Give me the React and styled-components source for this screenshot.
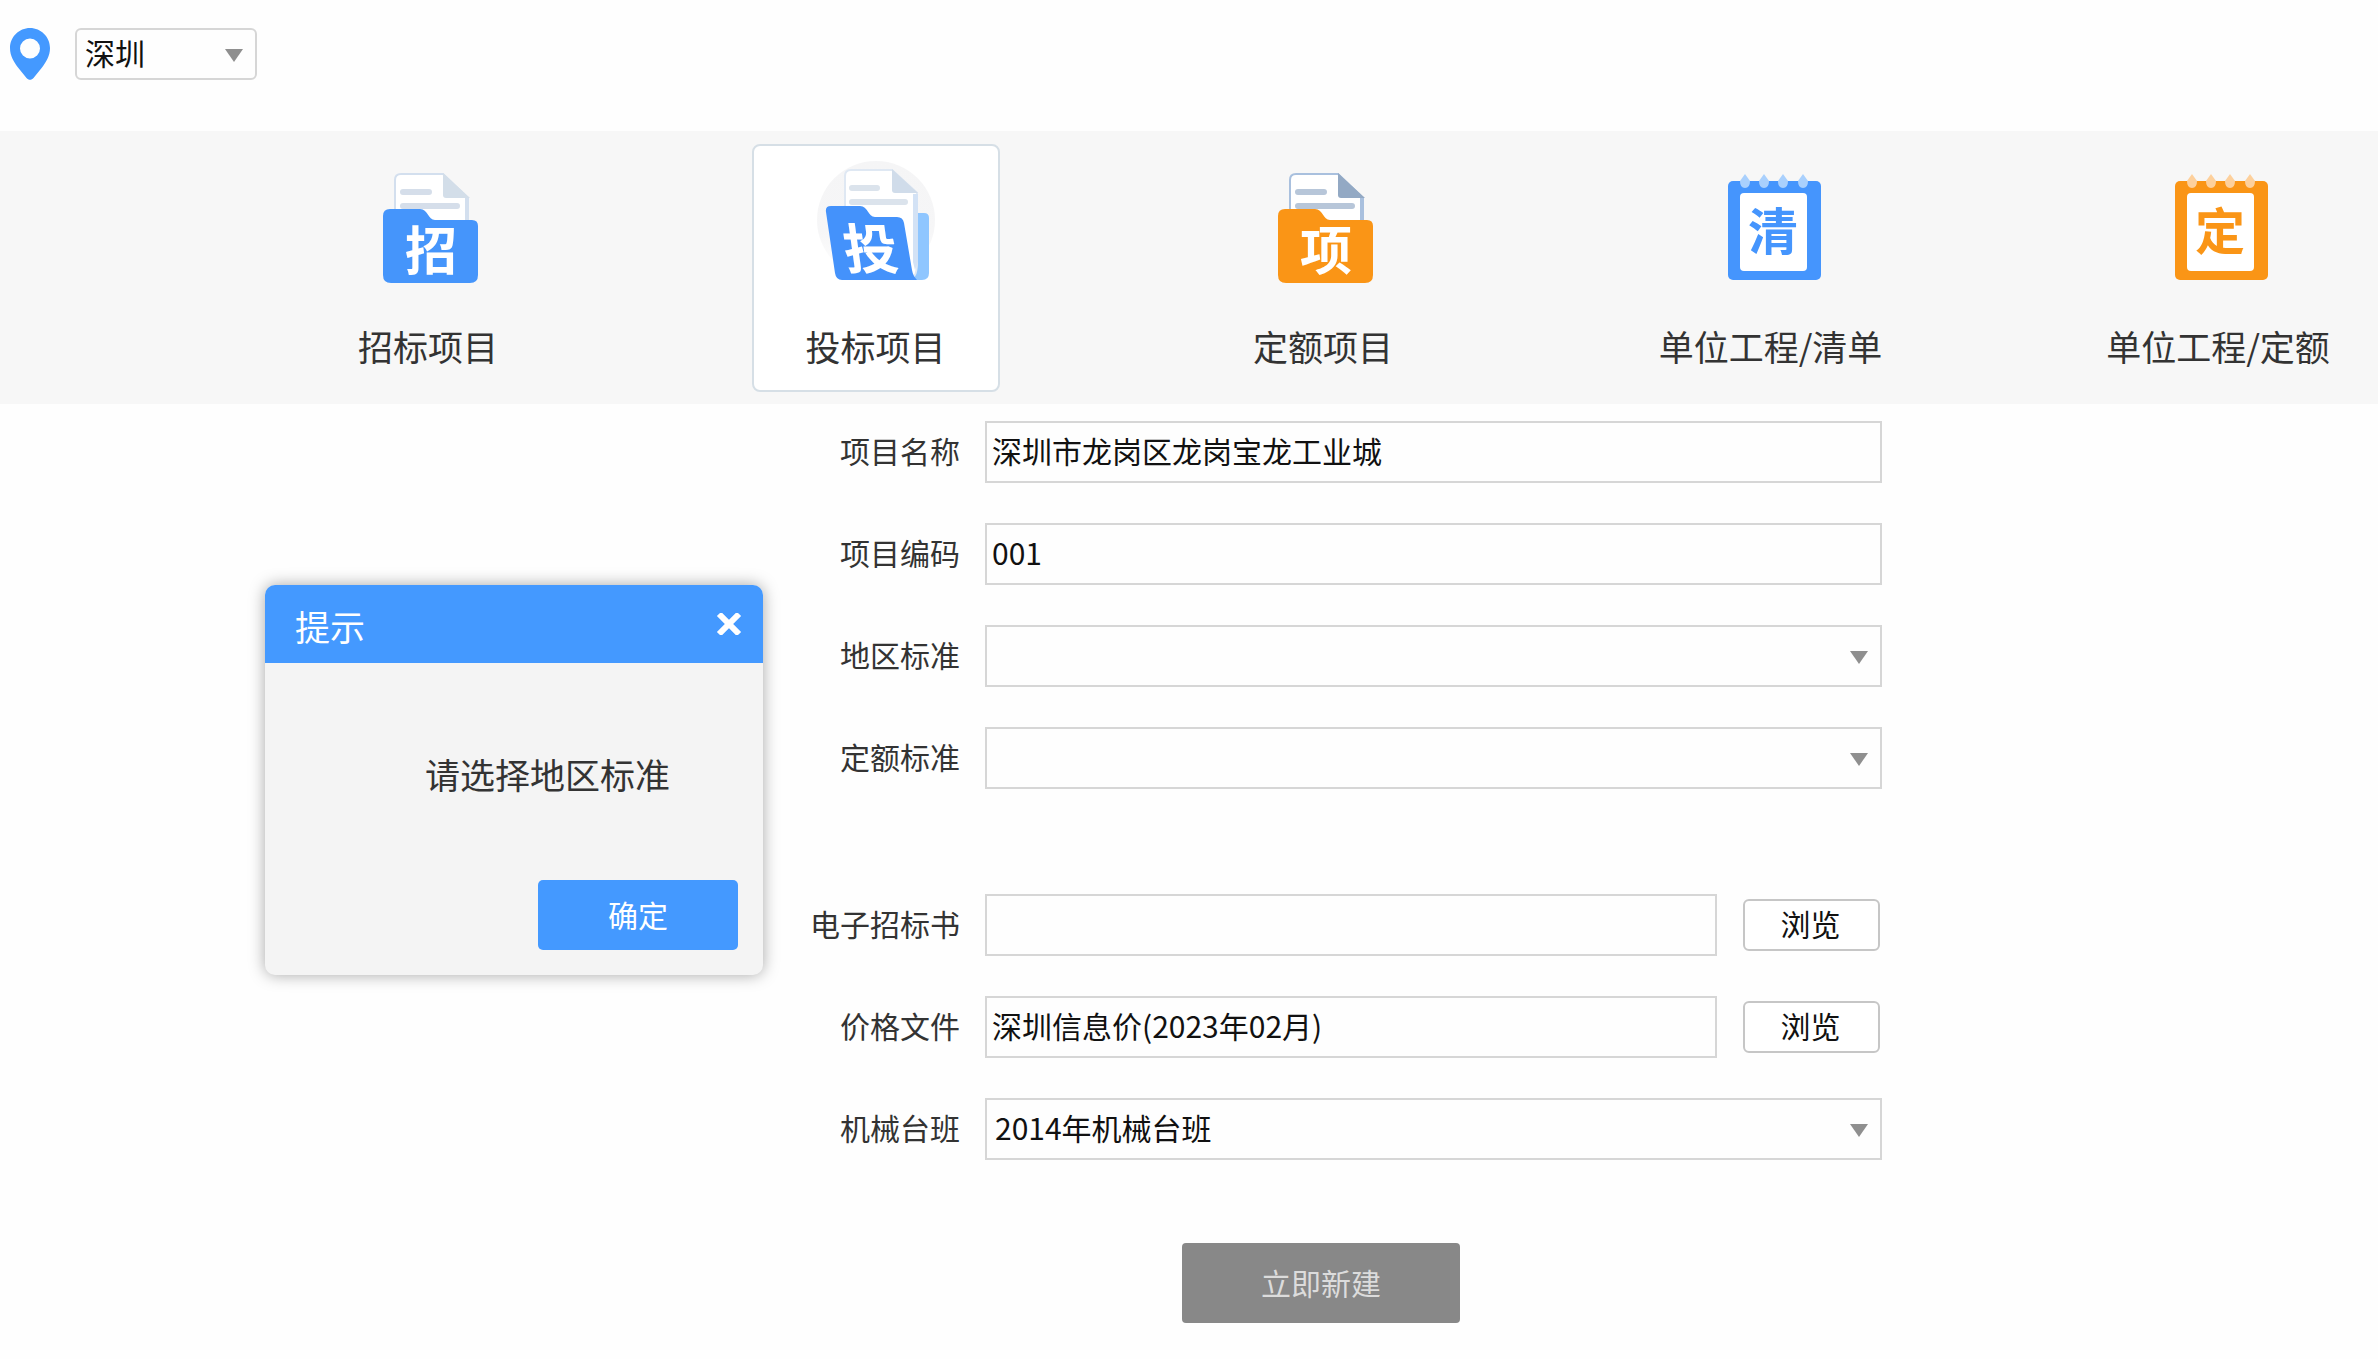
import React, { useState } from "react";
import styled, { createGlobalStyle } from "styled-components";

const GlobalStyle = createGlobalStyle`
  * {
    box-sizing: border-box;
  }
  body {
    margin: 0;
    background-color: #fefefe;
  }
  body, button, input, select {
    font-family: "Noto Sans CJK SC", sans-serif;
  }
`;

const Page = styled.div`
  position: relative;
  min-height: 100vh;
  color: #333;
  font-size: 30px;
`;

const TopBar = styled.header`
  display: flex;
  align-items: center;
  gap: 25px;
  padding: 28px 10px 51px;
`;

const SelectBox = styled.div`
  position: relative;
  width: ${(props) => (props.$small ? "182px" : "100%")};

  > svg {
    position: absolute;
    right: 14px;
    top: calc(50% - 5px);
    pointer-events: none;
  }

  > select {
    display: block;
    width: 100%;
    height: ${(props) => (props.$small ? "52px" : "62px")};
    padding: 0 40px 4px 8px;
    border: 2px solid #d6d6d6;
    border-radius: ${(props) => (props.$small ? "6px" : "0")};
    background-color: transparent;
    color: #111;
    font-size: 30px;
    appearance: none;
  }
`;

const TypeBar = styled.nav`
  display: flex;
  justify-content: space-between;
  padding: 13px 36px 12px 304px;
  background-color: #f7f7f7;
`;

const TypeCard = styled.button`
  display: flex;
  flex-direction: column;
  align-items: center;
  gap: 42px;
  width: 248px;
  height: 248px;
  padding: 14px 0 0;
  border: 2px solid ${(props) => (props.$active ? "#d6dfe6" : "transparent")};
  border-radius: 8px;
  background-color: ${(props) => (props.$active ? "#fff" : "transparent")};
  color: #333;
  font-size: 35px;
  line-height: 40px;
  white-space: nowrap;
  cursor: pointer;
`;

const TypeIcon = styled.svg`
  flex: none;
  width: 120px;
  height: 124px;
  overflow: visible;
`;

const Glyph = styled.text`
  font-family: "Noto Sans CJK SC", sans-serif;
  font-weight: 700;
  text-anchor: middle;
`;

const Form = styled.form`
  display: flex;
  flex-direction: column;
  gap: 40px;
  padding: 17px 496px 0 786px;
`;

const Row = styled.div`
  display: grid;
  grid-template-columns: 174px 1fr;
  align-items: center;
  column-gap: 25px;
  margin-top: ${(props) => (props.$section ? "65px" : "0")};

  > label {
    padding-bottom: 4px;
    text-align: right;
  }
`;

const FileField = styled.div`
  display: flex;
  align-items: center;
  gap: 26px;
  padding-right: 2px;
`;

const TextInput = styled.input`
  flex: 1;
  width: 100%;
  min-width: 0;
  height: 62px;
  padding: 0 5px 4px;
  border: 2px solid #d6d6d6;
  background-color: transparent;
  color: #111;
  font-size: 30px;
`;

const BrowseButton = styled.button`
  width: 137px;
  height: 52px;
  padding: 0 2px 4px 0;
  border: 2px solid #c6c6c6;
  border-radius: 6px;
  background-color: #fff;
  color: #111;
  font-size: 30px;
  line-height: 44px;
`;

const Actions = styled.div`
  display: flex;
  justify-content: center;
  margin-top: 43px;
  padding-right: 26px;
`;

const SubmitButton = styled.button`
  width: 278px;
  height: 80px;
  padding: 0 0 2px;
  border: none;
  border-radius: 4px;
  background-color: #888;
  color: #dcdcdc;
  font-size: 30px;
`;

const Dialog = styled.section`
  position: absolute;
  left: 265px;
  top: 585px;
  width: 498px;
  border-radius: 10px;
  overflow: hidden;
  background-color: #f4f4f4;
  box-shadow: 0 0 16px rgba(0, 0, 0, 0.35);
`;

const DialogHeader = styled.header`
  display: flex;
  align-items: center;
  justify-content: space-between;
  height: 78px;
  padding: 0 20px 0 30px;
  background-color: #49f;
  color: #fff;

  > h2 {
    margin: 2px 0 0;
    font-size: 35px;
    font-weight: 400;
  }

  > button {
    display: flex;
    padding: 0;
    border: none;
    background: none;
    color: #fff;
  }
`;

const DialogMessage = styled.p`
  margin: 0;
  padding: 85px 20px 80px 160px;
  font-size: 35px;
  line-height: 52px;
`;

const DialogFooter = styled.footer`
  display: flex;
  justify-content: flex-end;
  padding: 0 25px 25px;
`;

const ConfirmButton = styled.button`
  width: 200px;
  height: 70px;
  padding: 0 0 2px;
  border: none;
  border-radius: 5px;
  background-color: #49f;
  color: #fff;
  font-size: 30px;
`;

function Arrow() {
  return (
    <svg width="18" height="13" viewBox="0 0 18 13" aria-hidden="true">
      <path d="M0 0h18L9 13z" fill="#8f8f8f" />
    </svg>
  );
}

function PinIcon() {
  return (
    <svg width="40" height="52" viewBox="0 0 40 52" aria-hidden="true">
      <path
        d="M20 0C9 0 0 9 0 20c0 8 4 14 8 19.500L16.500 50c2 2.400 5 2.400 7 0L32 39.500C36 34 40 28 40 20 40 9 31 0 20 0zm0 10.500a10 10 0 1 1 0 20 10 10 0 0 1 0-20z"
        fill="#49f"
        fillRule="evenodd"
      />
    </svg>
  );
}

function FolderIcon({ char, color, line, edge, fold }) {
  return (
    <TypeIcon viewBox="0 0 120 124" aria-hidden="true">
      <path d="M27 70V20q0-6 6-6h42l25 24v32z" fill="#fff" stroke={edge} strokeWidth="2" />
      <path d="M97 38h4v28h-4z" fill={edge} />
      <path d="M75 13l27 25H78q-3 0-3-3z" fill={fold} />
      <path d="M35 32h26M35 46h54" stroke={line} strokeWidth="6" strokeLinecap="round" />
      <path
        d="M22 49h30c8 0 8 11 15 11h37q6 0 6 6v49q0 8-8 8H23q-8 0-8-8V56q0-7 7-7z"
        fill={color}
      />
      <Glyph x="63" y="110" fontSize="52" fill="#fff">
        {char}
      </Glyph>
    </TypeIcon>
  );
}

function OpenFolderIcon({ char }) {
  return (
    <TypeIcon viewBox="0 0 120 124" aria-hidden="true">
      <defs>
        <linearGradient id="halo" x1="0" y1="0" x2="0" y2="1">
          <stop offset="0" stopColor="#f5f5f6" />
          <stop offset="0.6" stopColor="#f6f6f7" />
          <stop offset="1" stopColor="#fff" />
        </linearGradient>
      </defs>
      <circle cx="60" cy="60" r="59" fill="url(#halo)" />
      <path d="M84 53h24q5 0 5 5v55q0 7-7 7H84z" fill="#8fc6ff" />
      <path d="M29 60V16q0-6 6-6h41l25 23v68q0 16-5 16H60z" fill="#fff" stroke="#dfe8f3" strokeWidth="2" />
      <path d="M97 34h5v68l-3 8-2-8z" fill="#d3e2f5" />
      <path d="M76 9l26 24H79q-3 0-3-3z" fill="#d0dcea" />
      <path d="M36 28h25M36 42h53" stroke="#dbe3ec" strokeWidth="6" strokeLinecap="round" />
      <path
        d="M15 46h29c8 0 8 11 15 11h22q6 0 7 6l8 47q1 6 5 10H26q-6 0-7-7L10 52q-1-6 5-6z"
        fill="#4492fb"
      />
      <Glyph x="42" y="109" fontSize="54" fill="#fff" transform="skewX(8)">
        {char}
      </Glyph>
    </TypeIcon>
  );
}

function NotebookIcon({ char, color, ring }) {
  return (
    <TypeIcon viewBox="0 0 120 124" aria-hidden="true">
      <rect x="17" y="21" width="93" height="99" rx="5" fill={color} />
      <rect x="29" y="33" width="67" height="78" rx="4" fill="#fff" />
      {[34, 53, 72, 92].map((x) => (
        <path key={x} d={`M${x} 14l5 7q0 7-5 7t-5-7z`} fill={ring} />
      ))}
      <Glyph x="62" y="90" fontSize="50" fill={color}>
        {char}
      </Glyph>
    </TypeIcon>
  );
}

const types = [
  {
    name: "招标项目",
    icon: <FolderIcon char="招" color="#4595fb" line="#d5deea" edge="#d3dfee" fold="#d3dee9" />,
  },
  { name: "投标项目", icon: <OpenFolderIcon char="投" /> },
  {
    name: "定额项目",
    icon: <FolderIcon char="项" color="#fa9516" line="#b7c6d9" edge="#a9c0de" fold="#93a9c4" />,
  },
  { name: "单位工程/清单", icon: <NotebookIcon char="清" color="#4595fd" ring="#a9d0fd" /> },
  { name: "单位工程/定额", icon: <NotebookIcon char="定" color="#fa9516" ring="#fdd09c" /> },
];

function App() {
  const [city, setCity] = useState("深圳");
  const [type, setType] = useState("投标项目");
  const [open, setOpen] = useState(true);
  const [form, setForm] = useState({
    name: "深圳市龙岗区龙岗宝龙工业城",
    code: "001",
    area: "",
    quota: "",
    tender: "",
    price: "深圳信息价(2023年02月)",
    machine: "2014年机械台班",
  });

  const change = (e) => setForm({ ...form, [e.target.name]: e.target.value });

  const submit = (e) => {
    e.preventDefault();
    if (!form.area) setOpen(true);
  };

  const input = (name) => <TextInput id={name} name={name} type="text" value={form[name]} onChange={change} />;

  const select = (name, options) => (
    <SelectBox>
      <select id={name} name={name} value={form[name]} onChange={change}>
        {options.map((option) => (
          <option key={option} value={option}>
            {option}
          </option>
        ))}
      </select>
      <Arrow />
    </SelectBox>
  );

  return (
    <Page>
      <GlobalStyle />
      <TopBar>
        <PinIcon />
        <SelectBox $small>
          <select aria-label="城市" value={city} onChange={(e) => setCity(e.target.value)}>
            <option>深圳</option>
          </select>
          <Arrow />
        </SelectBox>
      </TopBar>
      <TypeBar>
        {types.map((item) => (
          <TypeCard
            key={item.name}
            type="button"
            $active={item.name === type}
            aria-pressed={item.name === type}
            onClick={() => setType(item.name)}
          >
            {item.icon}
            <span>{item.name}</span>
          </TypeCard>
        ))}
      </TypeBar>
      <Form onSubmit={submit}>
        <Row>
          <label htmlFor="name">项目名称</label>
          {input("name")}
        </Row>
        <Row>
          <label htmlFor="code">项目编码</label>
          {input("code")}
        </Row>
        <Row>
          <label htmlFor="area">地区标准</label>
          {select("area", [""])}
        </Row>
        <Row>
          <label htmlFor="quota">定额标准</label>
          {select("quota", [""])}
        </Row>
        <Row $section>
          <label htmlFor="tender">电子招标书</label>
          <FileField>
            {input("tender")}
            <BrowseButton type="button">浏览</BrowseButton>
          </FileField>
        </Row>
        <Row>
          <label htmlFor="price">价格文件</label>
          <FileField>
            {input("price")}
            <BrowseButton type="button">浏览</BrowseButton>
          </FileField>
        </Row>
        <Row>
          <label htmlFor="machine">机械台班</label>
          {select("machine", ["2014年机械台班"])}
        </Row>
        <Actions>
          <SubmitButton type="submit">立即新建</SubmitButton>
        </Actions>
      </Form>
      {open && (
        <Dialog role="dialog" aria-labelledby="tip-title">
          <DialogHeader>
            <h2 id="tip-title">提示</h2>
            <button type="button" aria-label="关闭" onClick={() => setOpen(false)}>
              <svg width="28" height="22" viewBox="0 0 28 22">
                <path d="M4 1l20 20M24 1L4 21" stroke="currentColor" strokeWidth="6" />
              </svg>
            </button>
          </DialogHeader>
          <DialogMessage>请选择地区标准</DialogMessage>
          <DialogFooter>
            <ConfirmButton type="button" onClick={() => setOpen(false)}>
              确定
            </ConfirmButton>
          </DialogFooter>
        </Dialog>
      )}
    </Page>
  );
}

export default App;
